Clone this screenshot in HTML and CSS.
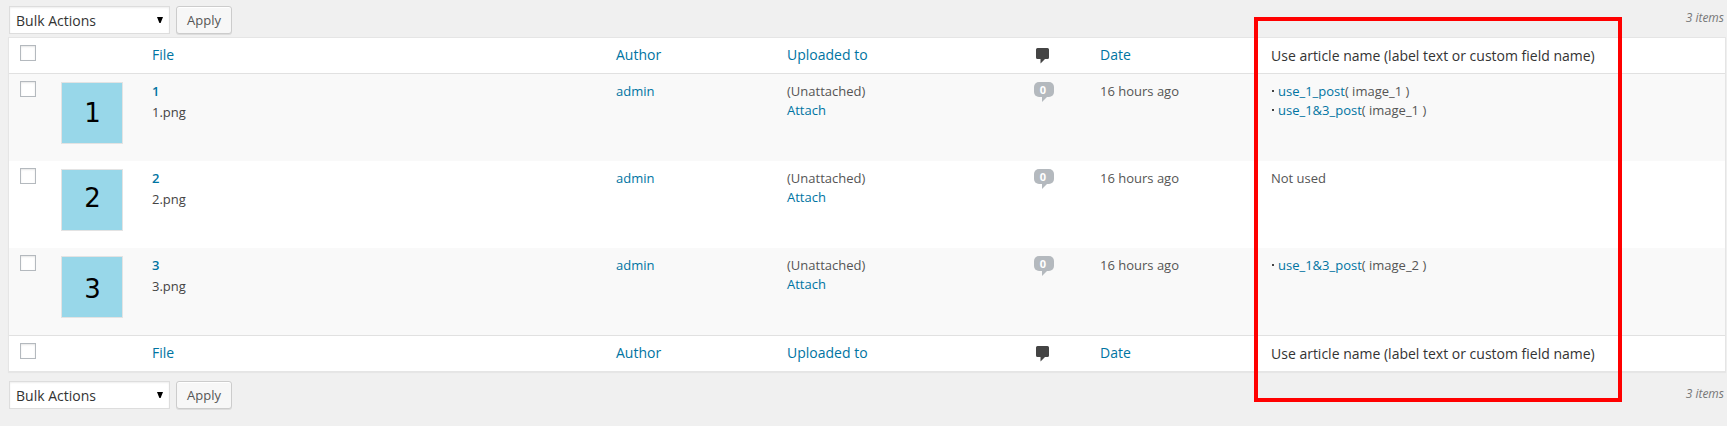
FILE: index.html
```html
<!DOCTYPE html>
<html lang="en">
<head>
<meta charset="utf-8">
<title>Media Library</title>
<link rel="stylesheet" href="styles.css">
</head>
<body>
<svg class="defs" width="0" height="0">
  <symbol id="comment" viewBox="0 0 13 16"><path d="M1.500 0h10A1.500 1.500 0 0 1 13 1.500v8A1.500 1.500 0 0 1 11.500 11H9L4.500 15.500V11h-3A1.500 1.500 0 0 1 0 9.500v-8A1.500 1.500 0 0 1 1.500 0z"/></symbol>
  <symbol id="arrow" viewBox="0 0 6 6"><path d="M0 0h6L3.600 6H2.400z"/></symbol>
</svg>

<div class="tablenav">
  <div class="select">Bulk Actions<svg class="arrow"><use href="#arrow"/></svg></div>
  <button class="button">Apply</button>
  <span class="count">3 items</span>
</div>

<div class="table">
  <div class="row head">
    <div class="check"><span class="box"></span></div>
    <div></div>
    <a>File</a>
    <a>Author</a>
    <a>Uploaded to</a>
    <div class="comments"><svg class="comment"><use href="#comment"/></svg></div>
    <a>Date</a>
    <div class="usage">Use article name (label text or custom field name)</div>
  </div>

  <div class="row item odd">
    <div class="check"><span class="box"></span></div>
    <div><div class="thumb">1</div></div>
    <div class="file"><a class="title">1</a><p class="name">1.png</p></div>
    <div><a>admin</a></div>
    <div>(Unattached)<br><a>Attach</a></div>
    <div class="comments"><span class="bubble">0</span></div>
    <div>16 hours ago</div>
    <ul class="uses"><li><a>use_1_post</a>( image_1 )</li><li><a>use_1&amp;3_post</a>( image_1 )</li></ul>
  </div>

  <div class="row item">
    <div class="check"><span class="box"></span></div>
    <div><div class="thumb thumb-two">2</div></div>
    <div class="file"><a class="title">2</a><p class="name">2.png</p></div>
    <div><a>admin</a></div>
    <div>(Unattached)<br><a>Attach</a></div>
    <div class="comments"><span class="bubble">0</span></div>
    <div>16 hours ago</div>
    <div>Not used</div>
  </div>

  <div class="row item odd">
    <div class="check"><span class="box"></span></div>
    <div><div class="thumb thumb-three">3</div></div>
    <div class="file"><a class="title">3</a><p class="name">3.png</p></div>
    <div><a>admin</a></div>
    <div>(Unattached)<br><a>Attach</a></div>
    <div class="comments"><span class="bubble">0</span></div>
    <div>16 hours ago</div>
    <ul class="uses"><li><a>use_1&amp;3_post</a>( image_2 )</li></ul>
  </div>

  <div class="row head foot">
    <div class="check"><span class="box"></span></div>
    <div></div>
    <a>File</a>
    <a>Author</a>
    <a>Uploaded to</a>
    <div class="comments"><svg class="comment"><use href="#comment"/></svg></div>
    <a>Date</a>
    <div class="usage">Use article name (label text or custom field name)</div>
  </div>
</div>

<div class="tablenav bottom">
  <div class="select">Bulk Actions<svg class="arrow"><use href="#arrow"/></svg></div>
  <button class="button">Apply</button>
  <span class="count">3 items</span>
</div>

<div class="highlight"></div>
</body>
</html>
```
FILE: styles.css
```css
* { box-sizing: border-box; }

body {
  position: relative;
  margin: 0;
  height: 426px;
  padding: 6px 1px 0 8px;
  overflow: hidden;
  background: #f0f0f0;
  color: #555;
  font: 13px/19px "Open Sans", sans-serif;
}

a { color: #0074a2; }

.defs { display: block; }

.tablenav {
  display: flex;
  align-items: flex-start;
  height: 31px;
  padding: 0 2px 0 1px;
}

.tablenav.bottom { margin-top: 9px; }

.select {
  display: flex;
  justify-content: space-between;
  width: 161px;
  height: 28px;
  padding: 4px 6px 0 6px;
  border: 1px solid #ddd;
  background: #fff;
  box-shadow: inset 0 1px 2px rgba(0, 0, 0, .07);
  color: #333;
  font-size: 14px;
}

.arrow {
  width: 6px;
  height: 6px;
  margin-top: 6px;
  fill: #000;
}

.button {
  width: 56px;
  height: 28px;
  margin-left: 6px;
  padding: 0;
  border: 1px solid #ccc;
  border-radius: 3px;
  background: #f7f7f7;
  box-shadow: inset 0 1px 0 #fff, 0 1px 0 rgba(0, 0, 0, .08);
  color: #555;
  font: 13px/26px "Open Sans", sans-serif;
}

.count {
  margin: 2px 0 0 auto;
  color: #777;
  font-size: 12px;
  font-style: italic;
}

.tablenav.bottom .count { margin-top: 3px; }

.table {
  width: 1718px;
  border: 1px solid #e5e5e5;
  background: #fff;
  box-shadow: 0 1px 1px rgba(0, 0, 0, .04);
}

.row {
  display: grid;
  grid-template-columns: 52px 91px 464px 171px 247px 66px 171px 1fr;
}

.head {
  height: 36px;
  padding-top: 7px;
  border-bottom: 1px solid #e1e1e1;
  color: #333;
  font-size: 14px;
}

.foot {
  border-top: 1px solid #e1e1e1;
  border-bottom: 0;
}

.usage { padding-top: 1px; }

.item {
  height: 87px;
  padding-top: 8px;
}

.odd { background: #f9f9f9; }

.check { padding-left: 11px; }

.box {
  display: block;
  width: 16px;
  height: 16px;
  border: 1px solid #b4b9be;
  background: #fff;
  box-shadow: inset 0 1px 2px rgba(0, 0, 0, .1);
}

.item .box { margin-top: -1px; }

.thumb {
  width: 62px;
  height: 62px;
  padding-left: 1px;
  border: 1px solid #e3e3e3;
  background: #98d7e9;
  color: #000;
  font: 26px/60px "DejaVu Sans", sans-serif;
  text-align: center;
}

.thumb-two { line-height: 57px; }
.thumb-three { line-height: 64px; }

.title { font-weight: 600; }

.name {
  margin: 2px 0 0;
  color: #444;
}

.comment {
  display: block;
  width: 13px;
  height: 16px;
  margin: 3px 0 0 2px;
  fill: #444;
}

.bubble {
  position: relative;
  display: block;
  width: 20px;
  height: 15px;
  border-radius: 5px;
  background: #b4b9be;
  color: #fff;
  font: bold 11px/16px "Open Sans", sans-serif;
  text-align: center;
  padding-right: 2px;
}

.bubble::after {
  content: "";
  position: absolute;
  top: 15px;
  left: 8px;
  border-top: 5px solid #b4b9be;
  border-right: 5px solid transparent;
}

.uses {
  margin: 0;
  padding: 0;
  list-style: none;
}

.uses li {
  display: flex;
  white-space: pre;
}

.uses li::before {
  content: "";
  width: 2px;
  height: 2px;
  margin: 8px 4px 0 1px;
  background: #444;
}

.highlight {
  position: absolute;
  top: 17px;
  left: 1254px;
  width: 368px;
  height: 385px;
  border: 4px solid #f00;
}
```
